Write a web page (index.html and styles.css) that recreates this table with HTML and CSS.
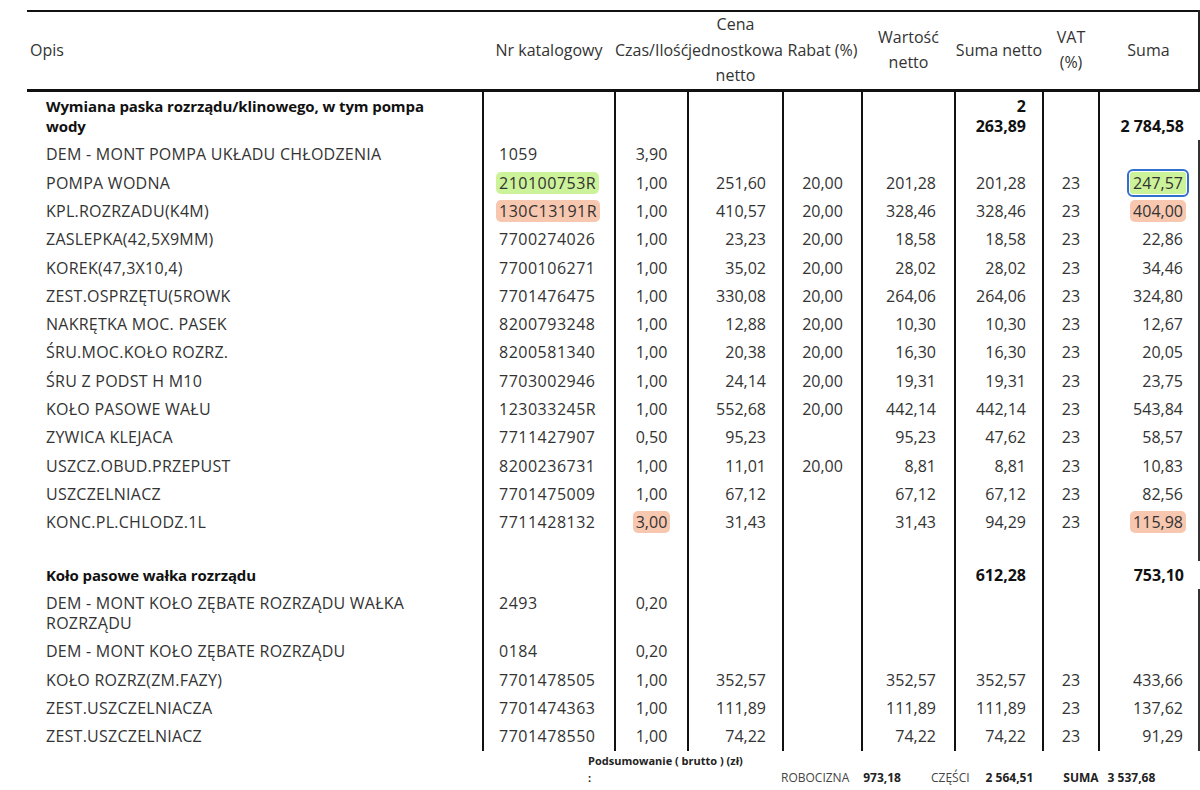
FILE: index.html
```html
<!DOCTYPE html>
<html lang="pl">
<head>
<meta charset="utf-8">
<title>Wycena</title>
<link rel="stylesheet" href="styles.css">
</head>
<body>
<table class="quote">
  <colgroup>
    <col class="w-opis"><col class="w-cat"><col class="w-qty"><col class="w-price"><col class="w-disc"><col class="w-val"><col class="w-net"><col class="w-vat"><col class="w-sum">
  </colgroup>
  <thead>
    <tr>
      <th class="opis">Opis</th>
      <th>Nr katalogowy</th>
      <th>Czas/Ilość</th>
      <th>Cena jednostkowa netto</th>
      <th>Rabat (%)</th>
      <th>Wartość netto</th>
      <th>Suma netto</th>
      <th class="vat">VAT (%)</th>
      <th>Suma</th>
    </tr>
  </thead>
  <tbody>
    <tr class="gh">
      <td class="desc">Wymiana paska rozrządu/klinowego, w tym pompa wody</td>
      <td></td><td></td><td></td><td></td><td></td>
      <td class="r net">2 263,89</td><td></td><td class="r sum">2 784,58</td>
    </tr>
    <tr class="it">
      <td class="desc">DEM - MONT POMPA UKŁADU CHŁODZENIA</td><td class="cat">1059</td><td class="c">3,90</td><td class="r"></td><td class="c"></td><td class="r val"></td><td class="r net"></td><td class="c"></td><td class="r sum"></td>
    </tr>
    <tr class="it">
      <td class="desc">POMPA WODNA</td><td class="cat"><span class="hl green">210100753R</span></td><td class="c">1,00</td><td class="r">251,60</td><td class="c">20,00</td><td class="r val">201,28</td><td class="r net">201,28</td><td class="c">23</td><td class="r sum"><span class="hl green sel">247,57</span></td>
    </tr>
    <tr class="it">
      <td class="desc">KPL.ROZRZADU(K4M)</td><td class="cat"><span class="hl salmon">130C13191R</span></td><td class="c">1,00</td><td class="r">410,57</td><td class="c">20,00</td><td class="r val">328,46</td><td class="r net">328,46</td><td class="c">23</td><td class="r sum"><span class="hl salmon">404,00</span></td>
    </tr>
    <tr class="it">
      <td class="desc">ZASLEPKA(42,5X9MM)</td><td class="cat">7700274026</td><td class="c">1,00</td><td class="r">23,23</td><td class="c">20,00</td><td class="r val">18,58</td><td class="r net">18,58</td><td class="c">23</td><td class="r sum">22,86</td>
    </tr>
    <tr class="it">
      <td class="desc">KOREK(47,3X10,4)</td><td class="cat">7700106271</td><td class="c">1,00</td><td class="r">35,02</td><td class="c">20,00</td><td class="r val">28,02</td><td class="r net">28,02</td><td class="c">23</td><td class="r sum">34,46</td>
    </tr>
    <tr class="it">
      <td class="desc">ZEST.OSPRZĘTU(5ROWK</td><td class="cat">7701476475</td><td class="c">1,00</td><td class="r">330,08</td><td class="c">20,00</td><td class="r val">264,06</td><td class="r net">264,06</td><td class="c">23</td><td class="r sum">324,80</td>
    </tr>
    <tr class="it">
      <td class="desc">NAKRĘTKA MOC. PASEK</td><td class="cat">8200793248</td><td class="c">1,00</td><td class="r">12,88</td><td class="c">20,00</td><td class="r val">10,30</td><td class="r net">10,30</td><td class="c">23</td><td class="r sum">12,67</td>
    </tr>
    <tr class="it">
      <td class="desc">ŚRU.MOC.KOŁO ROZRZ.</td><td class="cat">8200581340</td><td class="c">1,00</td><td class="r">20,38</td><td class="c">20,00</td><td class="r val">16,30</td><td class="r net">16,30</td><td class="c">23</td><td class="r sum">20,05</td>
    </tr>
    <tr class="it">
      <td class="desc">ŚRU Z PODST H M10</td><td class="cat">7703002946</td><td class="c">1,00</td><td class="r">24,14</td><td class="c">20,00</td><td class="r val">19,31</td><td class="r net">19,31</td><td class="c">23</td><td class="r sum">23,75</td>
    </tr>
    <tr class="it">
      <td class="desc">KOŁO PASOWE WAŁU</td><td class="cat">123033245R</td><td class="c">1,00</td><td class="r">552,68</td><td class="c">20,00</td><td class="r val">442,14</td><td class="r net">442,14</td><td class="c">23</td><td class="r sum">543,84</td>
    </tr>
    <tr class="it">
      <td class="desc">ZYWICA KLEJACA</td><td class="cat">7711427907</td><td class="c">0,50</td><td class="r">95,23</td><td class="c"></td><td class="r val">95,23</td><td class="r net">47,62</td><td class="c">23</td><td class="r sum">58,57</td>
    </tr>
    <tr class="it">
      <td class="desc">USZCZ.OBUD.PRZEPUST</td><td class="cat">8200236731</td><td class="c">1,00</td><td class="r">11,01</td><td class="c">20,00</td><td class="r val">8,81</td><td class="r net">8,81</td><td class="c">23</td><td class="r sum">10,83</td>
    </tr>
    <tr class="it">
      <td class="desc">USZCZELNIACZ</td><td class="cat">7701475009</td><td class="c">1,00</td><td class="r">67,12</td><td class="c"></td><td class="r val">67,12</td><td class="r net">67,12</td><td class="c">23</td><td class="r sum">82,56</td>
    </tr>
    <tr class="it">
      <td class="desc">KONC.PL.CHLODZ.1L</td><td class="cat">7711428132</td><td class="c"><span class="hl salmon">3,00</span></td><td class="r">31,43</td><td class="c"></td><td class="r val">31,43</td><td class="r net">94,29</td><td class="c">23</td><td class="r sum"><span class="hl salmon">115,98</span></td>
    </tr>
    <tr class="it spacer">
      <td></td><td></td><td></td><td></td><td></td><td></td><td></td><td></td><td></td>
    </tr>
  </tbody>
  <tbody>
    <tr class="gh">
      <td class="desc">Koło pasowe wałka rozrządu</td>
      <td></td><td></td><td></td><td></td><td></td>
      <td class="r net">612,28</td><td></td><td class="r sum">753,10</td>
    </tr>
    <tr class="it">
      <td class="desc">DEM - MONT KOŁO ZĘBATE ROZRZĄDU WAŁKA ROZRZĄDU</td><td class="cat">2493</td><td class="c">0,20</td><td class="r"></td><td class="c"></td><td class="r val"></td><td class="r net"></td><td class="c"></td><td class="r sum"></td>
    </tr>
    <tr class="it">
      <td class="desc">DEM - MONT KOŁO ZĘBATE ROZRZĄDU</td><td class="cat">0184</td><td class="c">0,20</td><td class="r"></td><td class="c"></td><td class="r val"></td><td class="r net"></td><td class="c"></td><td class="r sum"></td>
    </tr>
    <tr class="it">
      <td class="desc">KOŁO ROZRZ(ZM.FAZY)</td><td class="cat">7701478505</td><td class="c">1,00</td><td class="r">352,57</td><td class="c"></td><td class="r val">352,57</td><td class="r net">352,57</td><td class="c">23</td><td class="r sum">433,66</td>
    </tr>
    <tr class="it">
      <td class="desc">ZEST.USZCZELNIACZA</td><td class="cat">7701474363</td><td class="c">1,00</td><td class="r">111,89</td><td class="c"></td><td class="r val">111,89</td><td class="r net">111,89</td><td class="c">23</td><td class="r sum">137,62</td>
    </tr>
    <tr class="it">
      <td class="desc">ZEST.USZCZELNIACZ</td><td class="cat">7701478550</td><td class="c">1,00</td><td class="r">74,22</td><td class="c"></td><td class="r val">74,22</td><td class="r net">74,22</td><td class="c">23</td><td class="r sum">91,29</td>
    </tr>
  </tbody>
</table>

<div class="summary">
  <div class="sum-label">Podsumowanie ( brutto ) (zł) :</div>
  <span class="sum-key k-lab">ROBOCIZNA</span>
  <span class="sum-val">973,18</span>
  <span class="sum-key k-parts">CZĘŚCI</span>
  <span class="sum-val">2 564,51</span>
  <span class="sum-key k-total">SUMA</span>
  <span class="sum-val v-total">3 537,68</span>
</div>
</body>
</html>
```

FILE: styles.css
```css
html, body {
  margin: 0;
  padding: 0;
  background: #ffffff;
}

body {
  font-family: "Open Sans", "Noto Sans", sans-serif;
  color: #333333;
  width: 1200px;
  overflow: hidden;
}

.quote {
  margin: 10px 0 0 27px;
  width: 1172px;
  border-collapse: collapse;
  table-layout: fixed;
  font-size: 16px;
}

.w-opis { width: 456px; }
.w-cat { width: 132px; }
.w-qty { width: 73px; }
.w-price { width: 95px; }
.w-disc { width: 79px; }
.w-val { width: 93px; }
.w-net { width: 88px; }
.w-vat { width: 56px; }
.w-sum { width: 100px; }

.quote th {
  font-weight: 400;
  line-height: 25.6px;
  padding: 0;
  border-top: 2px solid #111111;
  border-bottom: 3px solid #111111;
  text-align: center;
  vertical-align: middle;
  color: #333333;
}

.quote th.opis {
  text-align: left;
  padding-left: 3px;
}

.quote th.vat {
  padding: 0 6px;
}

.quote th:last-child {
  border-right: 2px solid #222222;
}

.quote td {
  padding: 4px 0;
  line-height: 20.3px;
  vertical-align: top;
}

.quote td + td {
  border-left: 2px solid #111111;
}

.quote td.desc {
  padding-left: 19px;
  padding-right: 30px;
  letter-spacing: 0.25px;
}

.quote td.cat {
  padding-left: 15px;
  letter-spacing: 0.5px;
}

.quote td.c {
  text-align: center;
}

.quote td.r {
  text-align: right;
  padding-right: 16px;
}

.quote td.val {
  padding-right: 18px;
}

.quote td.net {
  padding-left: 14px;
}

.quote td.sum {
  padding-right: 15px;
}

.gh td {
  vertical-align: bottom;
  font-weight: 700;
  color: #111111;
}

.gh td.desc {
  font-size: 15px;
  letter-spacing: -0.1px;
}

.it td:last-child {
  border-right: 2px solid #333333;
}

.spacer td {
  height: 16px;
}

.hl {
  border-radius: 5px;
  padding: 0 3px;
  margin: 0 -3px;
}

.green {
  background: #ccf29a;
}

.salmon {
  background: #f7c7af;
}

.sel {
  outline: 2px solid #3270cc;
  outline-offset: 1px;
  border-radius: 3px;
}

.summary {
  display: flex;
  align-items: flex-end;
  margin: 1px 0 0 588px;
  font-size: 12px;
  line-height: 17px;
  color: #222222;
}

.sum-label {
  width: 157px;
  font-size: 11px;
  font-weight: 700;
}

.sum-key {
  font-weight: 400;
  color: #444444;
}

.sum-val {
  font-weight: 700;
  margin-left: 14px;
}

.k-lab { margin-left: 36px; }
.k-parts { margin-left: 30px; }
.k-parts + .sum-val { margin-left: 16px; }
.k-total { margin-left: 30px; font-weight: 700; color: #222222; }
.sum-val.v-total { margin-left: 9px; }
```
